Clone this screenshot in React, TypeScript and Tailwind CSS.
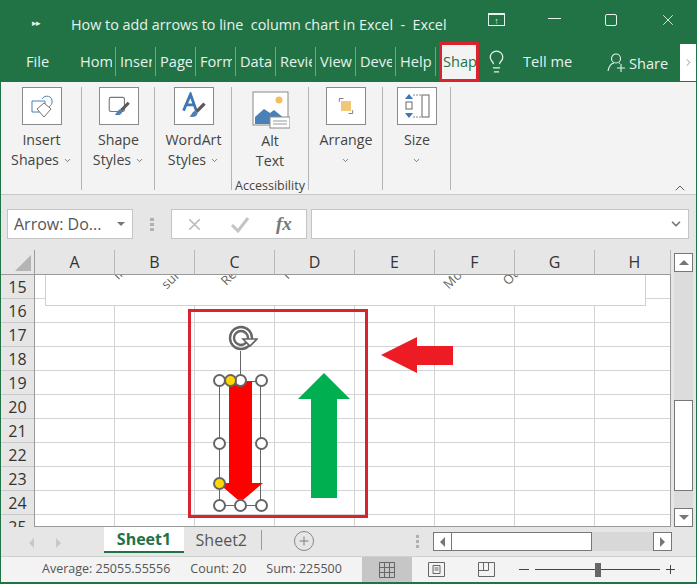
import { ChevronDown, ChevronRight, ChevronUp, Lightbulb, Plus, X } from "lucide-react"

const tabs = ["Hom", "Inser", "Page", "Form", "Data", "Revie", "View", "Deve", "Help"]
const columns = ["A", "B", "C", "D", "E", "F", "G", "H"]
const rows = [
  { label: "15", h: "h-[24px]" },
  { label: "16", h: "h-[24px]" },
  { label: "17", h: "h-[24px]" },
  { label: "18", h: "h-[24px]" },
  { label: "19", h: "h-[24px]" },
  { label: "20", h: "h-[24px]" },
  { label: "21", h: "h-[24px]" },
  { label: "22", h: "h-[24px]" },
  { label: "23", h: "h-[24px]" },
  { label: "24", h: "h-[24px]" },
  { label: "25", h: "h-[13px]" },
]

function RibbonButton({
  width,
  top,
  bottom,
  children,
}: {
  width: string
  top?: string
  bottom?: string
  children: React.ReactNode
}) {
  return (
    <div className={`${width} h-[103px] flex flex-col items-center pl-[1px] border-r border-[#b4b4b4] shrink-0`}>
      <div className="w-[40px] h-[38px] shrink-0 border border-[#8a8a8a] bg-white flex items-center justify-center mb-[5px]">
        {children}
      </div>
      <div className="text-[14.2px] leading-[20px] text-[#444] text-center whitespace-nowrap">
        <div>{top}</div>
        <div className="flex items-center justify-center gap-[4px] h-[20px]">
          {bottom}
          <ChevronDown size={9} strokeWidth={2} className="mt-[1px] text-[#555]" />
        </div>
      </div>
    </div>
  )
}

function Brush({ x, y }: { x: number; y: number }) {
  return (
    <g transform={`translate(${x} ${y})`}>
      <path d="M12 0 L14 2 L7 9 L5 7 Z" fill="#5a5a5a" />
      <path d="M5 7 L7 9 C7 12 3 13 0 12 C2 11 2 8 5 7 Z" fill="#4f81b5" />
    </g>
  )
}

function Handle({ className }: { className: string }) {
  return <div className={`absolute w-[13px] h-[13px] rounded-full border-2 border-[#666] bg-white ${className}`} />
}

function Yellow({ className }: { className: string }) {
  return <div className={`absolute w-[13px] h-[13px] rounded-full border-2 border-[#666] bg-[#ffd800] ${className}`} />
}

function Sheet() {
  return (
    <div className="relative flex-1 border-b border-r border-[#9a9a9a] bg-white overflow-hidden">
      {/* cell lines */}
      <div className="flex flex-col">
        {rows.map((r) => (
          <div key={r.label} className={`${r.h} shrink-0 flex border-b border-[#d4d4d4]`}>
            {columns.map((c) => (
              <div key={c} className="w-[80px] shrink-0 border-r border-[#d4d4d4]" />
            ))}
          </div>
        ))}
      </div>

      {/* leftover of the chart */}
      <div className="absolute left-[10px] top-0 w-[601px] h-[31px] bg-white border-l border-r border-b border-[#d0d0d0] overflow-hidden text-[13px] text-[#666]">
        <span className="absolute left-[68px] -top-[10px] -rotate-45">If</span>
        <span className="absolute left-[115px] -top-[5px] -rotate-45">sur</span>
        <span className="absolute left-[175px] -top-[7px] -rotate-45">Re</span>
        <span className="absolute left-[238px] -top-[10px] -rotate-45">r</span>
        <span className="absolute left-[397px] -top-[5px] -rotate-45">Mo</span>
        <span className="absolute left-[457px] -top-[7px] -rotate-45">Ot</span>
      </div>

      {/* selected arrow */}
      <svg className="absolute left-[193px] top-[49px] w-[30px] h-[30px]" viewBox="0 0 30 30" fill="none">
        <circle cx="13" cy="14" r="11" stroke="#666" strokeWidth="2.4" />
        <circle cx="13" cy="14" r="7" stroke="#666" strokeWidth="2.4" />
        <path d="M15 15 L29 15 L22 22 Z" fill="#fff" stroke="#666" strokeWidth="1.6" />
      </svg>
      <div className="absolute left-[205px] top-[76px] w-px h-[28px] bg-[#666]" />
      <div className="absolute left-[184px] top-[106px] w-[42px] h-[125px] border border-[#666]" />
      <svg className="absolute left-[180px] top-[100px] w-[60px] h-[140px]" viewBox="0 0 60 140">
        <path d="M14 6 H37 V108 H48 L25.5 127 L3 108 H14 Z" fill="#ff0000" />
      </svg>
      <Handle className="left-[178px] top-[99px]" />
      <Handle className="left-[199px] top-[99px]" />
      <Handle className="left-[220px] top-[99px]" />
      <Handle className="left-[178px] top-[162px]" />
      <Handle className="left-[220px] top-[162px]" />
      <Handle className="left-[178px] top-[224px]" />
      <Handle className="left-[199px] top-[224px]" />
      <Handle className="left-[220px] top-[224px]" />
      <Yellow className="left-[189px] top-[99px]" />
      <Yellow className="left-[178px] top-[202px]" />

      {/* green arrow */}
      <svg className="absolute left-[263px] top-[98px] w-[52px] h-[126px]" viewBox="0 0 52 126">
        <path d="M26 0 L52 26 H39 V125 H13 V26 H0 Z" fill="#00b050" />
      </svg>

      {/* annotations */}
      <div className="absolute left-[153px] top-[34px] w-[180px] h-[209px] border-[3px] border-[#d9232e]" />
      <svg className="absolute left-[346px] top-[62px] w-[73px] h-[36px]" viewBox="0 0 73 36">
        <path d="M0 18 L36 0 V9 H72 V28 H36 V36 Z" fill="#ed1c24" />
      </svg>
    </div>
  )
}

export default function App() {
  return (
    <div
      className="w-[697px] h-[584px] flex flex-col bg-[#e6e6e6] border-l border-r border-b-2 border-[#217346] overflow-hidden text-[#444]"
      style={{ fontFamily: '"Open Sans", "Noto Sans", sans-serif' }}
    >
      {/* title bar */}
      <div className="h-[41px] shrink-0 bg-[#217346] flex items-center text-[#e8f2ec] text-[14.35px] relative">
        <span className="ml-[31px] text-[9px] tracking-[-1px] mt-[4px]">▸▸</span>
        <span className="ml-[31px] whitespace-pre mt-[8px]">How to add arrows to line  column chart in Excel  -  Excel</span>
        <div className="absolute left-[487px] top-[13px] w-[17px] h-[13px] border border-[#e8f2ec] border-t-2 flex items-center justify-center">
          <span className="text-[9px] leading-none">↑</span>
        </div>
        <div className="absolute left-[547px] top-[18px] w-[13px] h-px bg-[#e8f2ec]" />
        <div className="absolute left-[604px] top-[14px] w-[12px] h-[12px] border border-[#e8f2ec] rounded-[2px]" />
        <X size={18} strokeWidth={1.2} className="absolute left-[658px] top-[11px]" />
      </div>

      {/* tabs */}
      <div className="h-[41px] shrink-0 bg-[#217346] flex items-center text-[#e8f2ec] text-[14.6px] relative">
        <div className="w-[75px] pl-[25px]">File</div>
        {tabs.map((t) => (
          <div
            key={t}
            className="w-[40px] h-[29px] pl-[4px] pr-[3px] flex items-center border-r border-[#6fa587] shrink-0"
          >
            <span className="block min-w-0 overflow-hidden whitespace-nowrap">{t}</span>
          </div>
        ))}
        <div className="ml-[3px] w-[40px] h-[40px] bg-[#f3f3f3] border-[3px] border-[#d9232e] text-[#217346] pl-[1px] flex items-center overflow-hidden shrink-0">
          <span className="block min-w-0 overflow-hidden whitespace-nowrap">Shap</span>
        </div>
        <Lightbulb size={25} strokeWidth={1.2} className="ml-[5px] shrink-0" />
        <span className="ml-[14px]">Tell me</span>
        <svg viewBox="0 0 20 20" className="absolute left-[606px] top-[11px] w-[20px] h-[20px]" fill="none" stroke="#e8f2ec" strokeWidth="1.1">
          <circle cx="9" cy="6.5" r="4.5" />
          <path d="M1 19 C2 14 4 11.5 7 11 M12 11 L13 11.5 M10 16 H18 M14 12 V20" />
        </svg>
        <span className="absolute left-[628px] top-[12px]">Share</span>
        <div className="absolute right-0 top-[3px] w-[16px] h-[37px] bg-white flex items-center justify-center">
          <ChevronRight size={11} className="text-[#888]" />
        </div>
      </div>

      {/* ribbon */}
      <div className="h-[113px] shrink-0 bg-[#f3f3f3] border-b border-[#c8c8c8] pt-[5px] flex relative">
        <RibbonButton width="w-[81px]" top="Insert" bottom="Shapes">
          <svg viewBox="0 0 24 24" className="w-[24px] h-[24px]" fill="none" strokeWidth="1">
            <path d="M2 7 H15 V18 H2 Z" stroke="#4f81b5" />
            <path d="M12 5 C15 0 23 2 22 8 C22 10 21 11 20 12 L14 20" stroke="#4f81b5" />
            <path d="M14 9 L21 15 L14 23 L7 15 Z" fill="#fff" stroke="#777" />
          </svg>
        </RibbonButton>
        <RibbonButton width="w-[73px]" top="Shape" bottom="Styles">
          <svg viewBox="0 0 24 24" className="w-[26px] h-[26px]" fill="none">
            <rect x="3" y="4" width="14" height="13" rx="1.5" stroke="#777" />
            <Brush x={8} y={8} />
          </svg>
        </RibbonButton>
        <RibbonButton width="w-[77px]" top="WordArt" bottom="Styles">
          <svg viewBox="0 0 24 24" className="w-[28px] h-[28px]" fill="none">
            <path d="M3 16 L9 2 L14 16 M5.5 11 H12" stroke="#3f77b5" strokeWidth="2.4" />
            <Brush x={8} y={9} />
          </svg>
        </RibbonButton>
        <div className="w-[77px] h-[103px] flex flex-col items-center border-r border-[#b4b4b4] shrink-0">
          <svg viewBox="0 0 38 38" className="w-[38px] h-[38px] shrink-0 mt-[4px] ml-[2px]" fill="none">
            <rect x="1" y="1" width="35" height="33" fill="#fff" stroke="#8a8a8a" />
            <circle cx="27" cy="9" r="3.5" fill="#f0c060" />
            <path d="M3 33 V26 L12 18 L18 22 L22 19 L33 28 V33 Z" fill="#4a7fb8" />
            <rect x="18" y="26" width="20" height="11" fill="#fff" stroke="#8a8a8a" />
            <path d="M21 30 H35 M21 33 H35" stroke="#999" />
          </svg>
          <div className="text-[14.2px] leading-[20px] text-center mt-[2px] shrink-0">
            <div>Alt</div>
            <div>Text</div>
          </div>
          <div className="text-[12.5px] leading-[16px] mt-[7px] whitespace-nowrap shrink-0">Accessibility</div>
        </div>
        <RibbonButton width="w-[74px]" top="Arrange" bottom="">
          <svg viewBox="0 0 24 24" className="w-[20px] h-[20px]" fill="none">
            <path d="M4 7 V3 H9 M20 17 V21 H15" stroke="#666" />
            <rect x="6" y="6" width="12" height="12" fill="#f0c878" />
          </svg>
        </RibbonButton>
        <RibbonButton width="w-[68px]" top="Size" bottom="">
          <svg viewBox="0 0 28 26" className="w-[28px] h-[26px]" fill="none">
            <path d="M6 1 L10 6 H2 Z M6 25 L10 20 H2 Z" fill="#3f77b5" />
            <rect x="3" y="9" width="6" height="7" stroke="#666" />
            <path d="M10 2 H18 M10 24 H18" stroke="#888" strokeDasharray="2 1" />
            <rect x="19" y="2" width="7" height="22" stroke="#666" />
          </svg>
        </RibbonButton>
        <ChevronUp size={16} strokeWidth={1.4} className="absolute left-[671px] top-[98px] text-[#555]" />
      </div>

      {/* formula bar */}
      <div className="h-[55px] shrink-0 flex items-start pl-[6px] pt-[14px] bg-[#e6e6e6]">
        <div className="w-[126px] h-[30px] bg-white border border-[#c4c4c4] flex items-center justify-between pl-[6px] pr-[7px] text-[16px] text-[#555] whitespace-nowrap">
          Arrow: Do...
          <span className="w-0 h-0 border-x-[4px] border-x-transparent border-t-[4px] border-t-[#777]" />
        </div>
        <div className="w-[38px] h-[30px] flex flex-col items-center justify-center gap-[2px]">
          <span className="w-[4px] h-[3px] bg-[#b0b0b0]" />
          <span className="w-[4px] h-[3px] bg-[#b0b0b0]" />
          <span className="w-[4px] h-[3px] bg-[#b0b0b0]" />
        </div>
        <div className="w-[136px] h-[30px] bg-white border border-[#c4c4c4] flex items-center text-[#b8b8b8]">
          <X size={19} strokeWidth={2} className="ml-[13px]" />
          <svg viewBox="0 0 20 20" className="w-[20px] h-[20px] ml-[26px]" fill="none">
            <path d="M2 11 L8 17 L18 4" stroke="#c4c4c4" strokeWidth="3" />
          </svg>
          <span className="ml-[26px] italic text-[#777] text-[19px] font-semibold" style={{ fontFamily: '"Liberation Serif", serif' }}>
            fx
          </span>
        </div>
        <div className="ml-[4px] w-[378px] h-[30px] bg-white border border-[#c4c4c4] flex items-center justify-end pr-[5px]">
          <ChevronDown size={14} strokeWidth={3} className="text-[#777]" />
        </div>
      </div>

      {/* column headers */}
      <div className="h-[25px] shrink-0 flex text-[16px] text-[#333]">
        <div className="w-[34px] h-[25px] border-b border-r border-[#9a9a9a] relative shrink-0">
          <div className="absolute right-[3px] bottom-[3px] w-0 h-0 border-l-[16px] border-l-transparent border-b-[16px] border-b-[#b4b4b4]" />
        </div>
        {columns.map((c) => (
          <div
            key={c}
            className={`${c === "H" ? "w-[76px] pl-[4px]" : "w-[80px]"} h-[25px] border-b border-r border-b-[#9a9a9a] border-r-[#b8b8b8] flex items-center justify-center shrink-0`}
          >
            {c}
          </div>
        ))}
      </div>

      {/* sheet */}
      <div className="h-[252px] shrink-0 flex">
        <div className="w-[34px] shrink-0 flex flex-col text-[16px] leading-[25px] text-[#333] border-r border-[#9a9a9a] overflow-hidden">
          {rows.map((r) => (
            <div key={r.label} className={`${r.h} shrink-0 text-center border-b border-[#c8c8c8] overflow-hidden`}>
              {r.label}
            </div>
          ))}
        </div>
        <div className="w-[636px] flex"><Sheet /></div>
        <div className="w-[19px] ml-[3px] -mt-[22px] h-[274px] flex flex-col bg-[#dcdcdc]">
          <div className="h-[19px] bg-white border border-[#777] flex items-center justify-center shrink-0">
            <span className="w-0 h-0 border-x-[5px] border-x-transparent border-b-[5px] border-b-[#777]" />
          </div>
          <div className="h-[128px] shrink-0" />
          <div className="h-[91px] bg-white border border-[#777] shrink-0" />
          <div className="flex-1" />
          <div className="h-[19px] bg-white border border-[#777] flex items-center justify-center shrink-0">
            <span className="w-0 h-0 border-x-[5px] border-x-transparent border-t-[5px] border-t-[#777]" />
          </div>
        </div>
      </div>

      {/* sheet tabs */}
      <div className="h-[29px] shrink-0 flex items-start relative">
        <div className="w-[103px] h-[26px] flex items-center pl-[28px] gap-[22px] mt-[3px]">
          <span className="w-0 h-0 border-y-[5px] border-y-transparent border-r-[5px] border-r-[#c8c8c8]" />
          <span className="w-0 h-0 border-y-[5px] border-y-transparent border-l-[5px] border-l-[#c8c8c8]" />
        </div>
        <div className="w-[80px] h-[26px] bg-white border-b-2 border-[#217346] text-[#217346] font-bold text-[16px] flex items-center justify-center">
          Sheet1
        </div>
        <div className="w-[78px] h-[26px] text-[16px] text-[#555] flex items-center justify-end">
          <span className="pr-[14px] border-r border-[#999] leading-[20px]">Sheet2</span>
        </div>
        <div className="ml-[32px] mt-[4px] w-[20px] h-[20px] rounded-full border border-[#888] flex items-center justify-center">
          <Plus size={14} strokeWidth={1.6} className="text-[#777]" />
        </div>
        <div className="absolute left-[415px] top-[8px] flex flex-col gap-[2px]">
          <span className="w-[3px] h-[3px] bg-[#b0b0b0]" />
          <span className="w-[3px] h-[3px] bg-[#b0b0b0]" />
          <span className="w-[3px] h-[3px] bg-[#b0b0b0]" />
        </div>
        <div className="absolute left-[432px] top-[5px] w-[239px] h-[19px] flex bg-[#d8d8d8]">
          <div className="w-[19px] bg-white border border-[#777] flex items-center justify-center">
            <span className="w-0 h-0 border-y-[5px] border-y-transparent border-r-[5px] border-r-[#777]" />
          </div>
          <div className="w-[140px] bg-white border border-l-0 border-[#777]" />
          <div className="flex-1" />
          <div className="w-[19px] bg-white border border-[#777] flex items-center justify-center">
            <span className="w-0 h-0 border-y-[5px] border-y-transparent border-l-[5px] border-l-[#777]" />
          </div>
        </div>
      </div>

      {/* status bar */}
      <div className="flex-1 flex items-center bg-[#f3f3f3] border-t border-[#d0d0d0] text-[12.5px] text-[#555] relative whitespace-nowrap">
        <span className="ml-[41px]">Average: 25055.55556</span>
        <span className="ml-[20px]">Count: 20</span>
        <span className="ml-[20px]">Sum: 225500</span>
        <div className="absolute left-[361px] top-0 w-[50px] h-full bg-[#c6c6c6] flex items-center justify-center">
          <svg viewBox="0 0 16 16" className="w-[16px] h-[16px]" fill="none" stroke="#666">
            <path d="M.5.5 H15.5 V15.5 H.5 Z M.5 5.5 H15.5 M.5 10.5 H15.5 M5.5 .5 V15.5 M10.5 .5 V15.5" />
          </svg>
        </div>
        <svg viewBox="0 0 17 15" className="absolute left-[427px] top-[5px] w-[17px] h-[15px]" fill="none" stroke="#666">
          <path d="M.5.5 H16.5 V14.5 H.5 Z M5 3.5 H12 V11.5 H5 Z M6.5 6 H10.5 M6.5 8 H10.5" />
        </svg>
        <svg viewBox="0 0 17 15" className="absolute left-[477px] top-[5px] w-[17px] h-[15px]" fill="none" stroke="#666">
          <path d="M.5.5 H16.5 V14.5 H.5 Z M.5 8.5 H10.5 V.5 M5.5 .5 V8.5" />
        </svg>
        <div className="absolute left-[518px] top-[12px] w-[10px] h-px bg-[#444]" />
        <div className="absolute left-[534px] top-[12px] w-[125px] h-px bg-[#444]" />
        <div className="absolute left-[594px] top-[6px] w-[6px] h-[14px] bg-[#666]" />
        <div className="absolute left-[665px] top-[12px] w-[9px] h-px bg-[#444]" />
        <div className="absolute left-[669px] top-[8px] w-px h-[9px] bg-[#444]" />
      </div>
    </div>
  )
}
